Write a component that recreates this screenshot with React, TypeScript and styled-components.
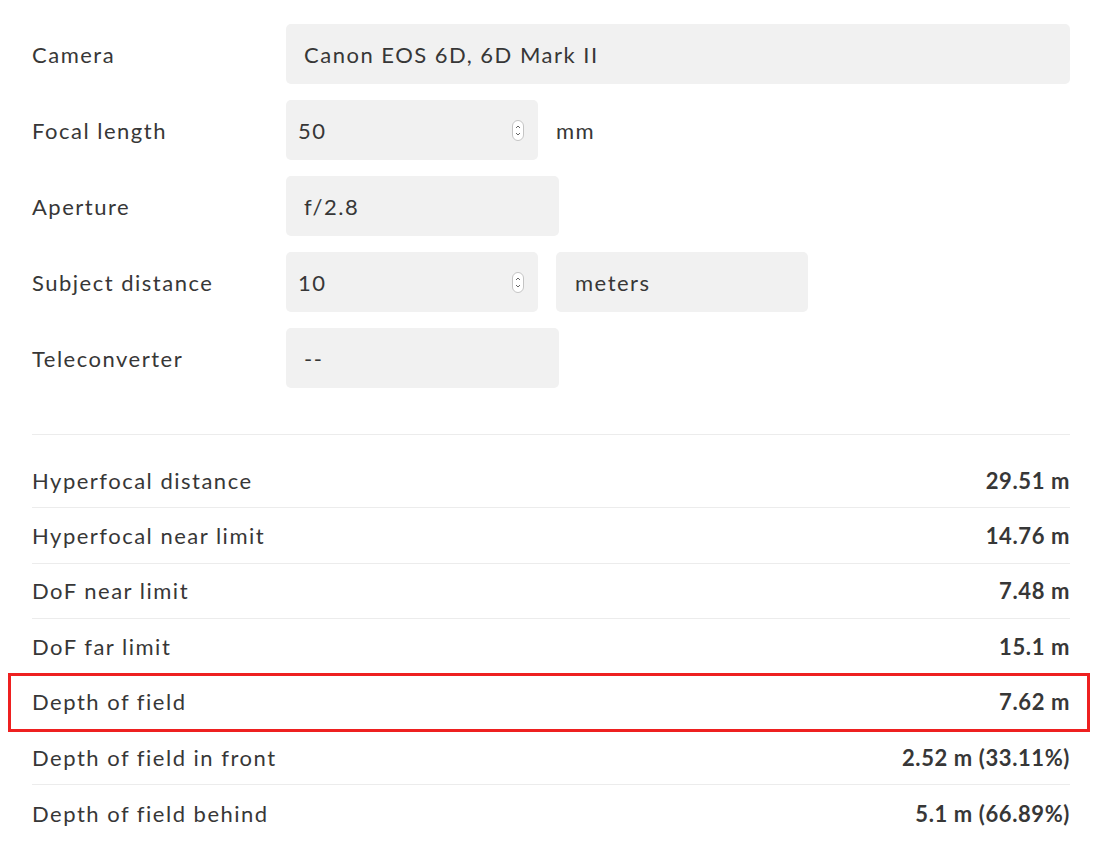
import React from "react";
import styled, { createGlobalStyle } from "styled-components";

const GlobalStyle = createGlobalStyle`
    body {
        margin: 0;
        background: #fff;
        font-family: Lato, "Open Sans", sans-serif;
        color: #373737;
        letter-spacing: 1.5px;
    }
`;

const Page = styled.div`
    padding: 24px 30px 20px 32px;
`;

const FormRow = styled.div`
    display: grid;
    grid-template-columns: 254px 1fr;
    align-items: center;
    height: 60px;
    margin-bottom: 16px;
`;

const Label = styled.div`
    font-size: 22px;
`;

const Controls = styled.div`
    display: flex;
    align-items: center;
    gap: 18px;
    height: 100%;
`;

const Field = styled.div<{ $width?: number; $pad?: number }>`
    display: flex;
    align-items: center;
    justify-content: space-between;
    box-sizing: border-box;
    width: ${p => (p.$width ? `${p.$width}px` : "100%")};
    height: 60px;
    padding: 0 14px 0 ${p => p.$pad ?? 18}px;
    background: #f1f1f1;
    border-radius: 5px;
    font-size: 22px;
`;

const Unit = styled.span`
    font-size: 22px;
`;

const SpinBox = styled.svg`
    flex: none;
`;

const Divider = styled.hr`
    border: none;
    border-top: 1px solid #ececec;
    margin: 46px 0 18px;
`;

const ResultRow = styled.div<{ $highlight?: boolean }>`
    position: relative;
    display: flex;
    align-items: center;
    justify-content: space-between;
    box-sizing: border-box;
    height: 55.4px;
    border-bottom: 1px solid #ececec;
    font-size: 22px;
    &:last-child {
        border-bottom: none;
    }
    ${p =>
        p.$highlight &&
        `
        &::after {
            content: "";
            position: absolute;
            top: -2px;
            bottom: -3px;
            left: -24px;
            right: -20px;
            border: 3px solid #ee2020;
        }
    `}
`;

const Value = styled.span`
    font-weight: 700;
    letter-spacing: 0.6px;
`;

const Spinner = () => (
    <SpinBox width="12" height="21" viewBox="0 0 12 21">
        <rect x="0.5" y="0.5" width="11" height="20" rx="5.5" fill="#fff" stroke="#c4c4c4" />
        <path d="M4 8 L6 6 L8 8" fill="none" stroke="#666" strokeWidth="1" />
        <path d="M4 13 L6 15 L8 13" fill="none" stroke="#666" strokeWidth="1" />
    </SpinBox>
);

const results: { label: string; value: string; highlight?: boolean }[] = [
    { label: "Hyperfocal distance", value: "29.51 m" },
    { label: "Hyperfocal near limit", value: "14.76 m" },
    { label: "DoF near limit", value: "7.48 m" },
    { label: "DoF far limit", value: "15.1 m" },
    { label: "Depth of field", value: "7.62 m", highlight: true },
    { label: "Depth of field in front", value: "2.52 m (33.11%)" },
    { label: "Depth of field behind", value: "5.1 m (66.89%)" },
];

export default function App() {
    return (
        <Page>
            <GlobalStyle />
            <FormRow>
                <Label>Camera</Label>
                <Controls>
                    <Field>Canon EOS 6D, 6D Mark II</Field>
                </Controls>
            </FormRow>
            <FormRow>
                <Label>Focal length</Label>
                <Controls>
                    <Field $width={252} $pad={12}>
                        50
                        <Spinner />
                    </Field>
                    <Unit>mm</Unit>
                </Controls>
            </FormRow>
            <FormRow>
                <Label>Aperture</Label>
                <Controls>
                    <Field $width={273}>f/2.8</Field>
                </Controls>
            </FormRow>
            <FormRow>
                <Label>Subject distance</Label>
                <Controls>
                    <Field $width={252} $pad={12}>
                        10
                        <Spinner />
                    </Field>
                    <Field $width={252} $pad={19}>meters</Field>
                </Controls>
            </FormRow>
            <FormRow>
                <Label>Teleconverter</Label>
                <Controls>
                    <Field $width={273}>--</Field>
                </Controls>
            </FormRow>
            <Divider />
            {results.map(r => (
                <ResultRow key={r.label} $highlight={r.highlight}>
                    <span>{r.label}</span>
                    <Value>{r.value}</Value>
                </ResultRow>
            ))}
        </Page>
    );
}
